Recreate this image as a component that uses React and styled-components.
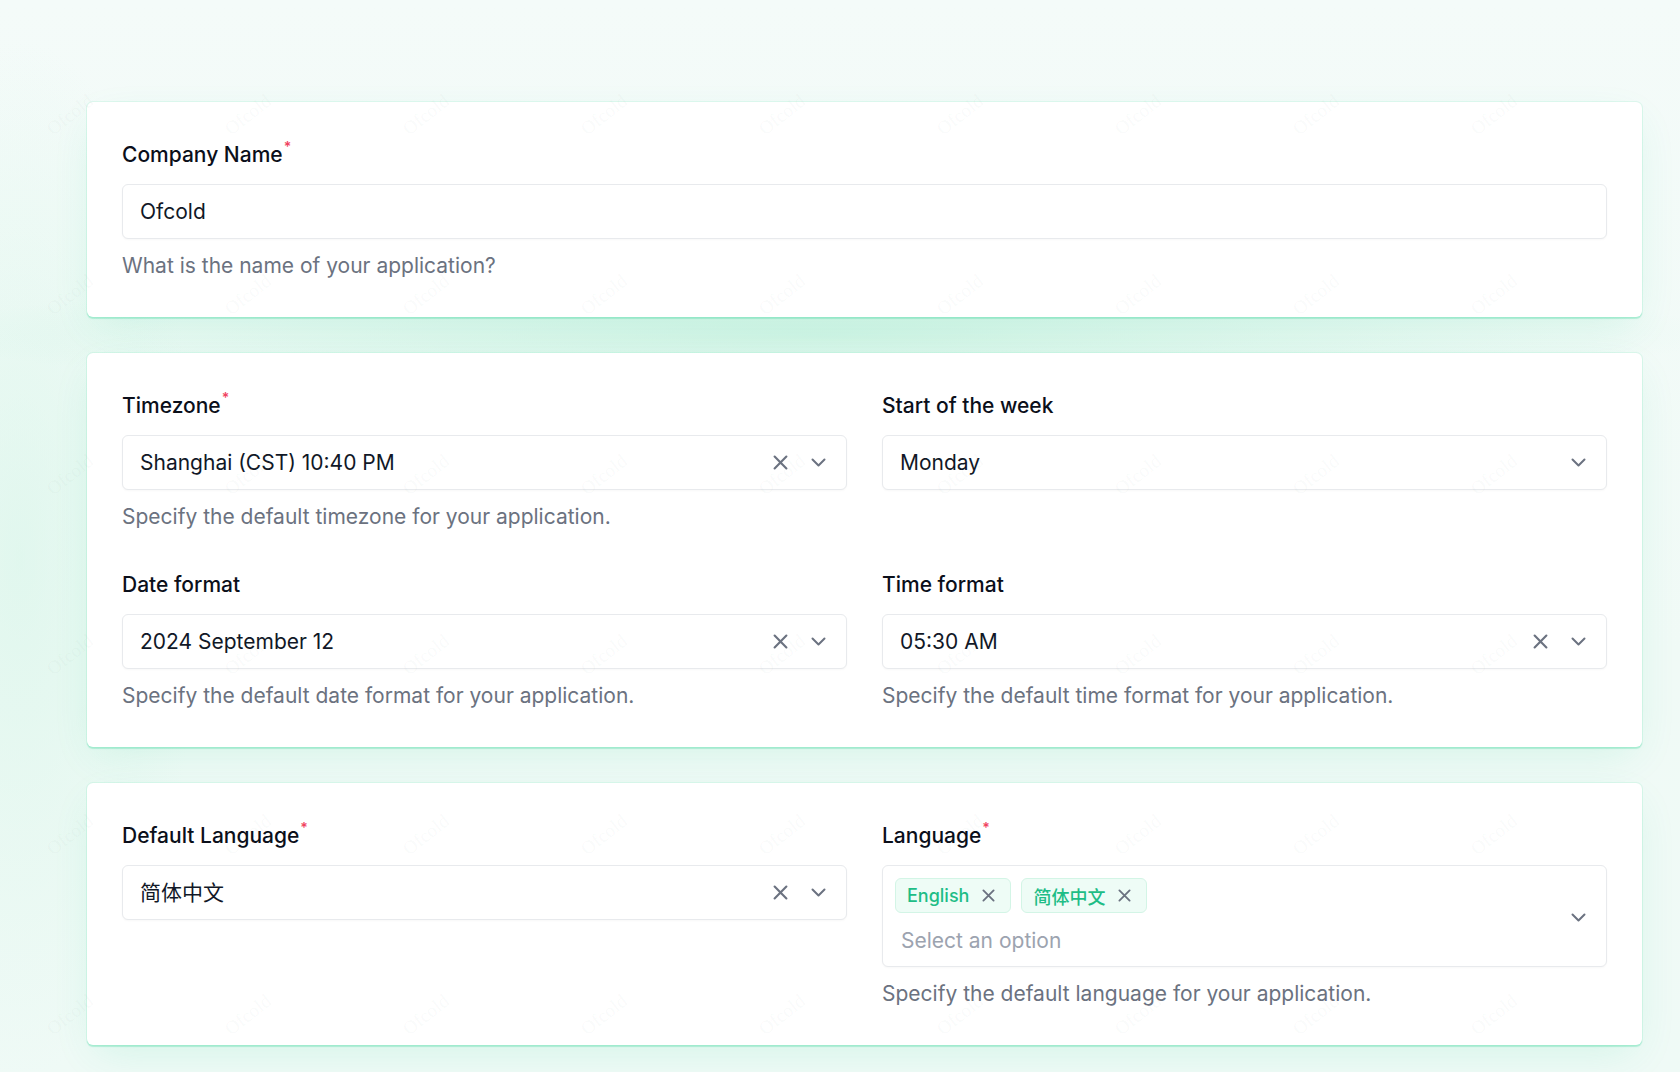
import React from "react";
import styled, { createGlobalStyle } from "styled-components";

const GlobalStyle = createGlobalStyle`
  html, body { margin: 0; padding: 0; }
  body {
    font-family: Inter, "Noto Sans", "Noto Sans CJK SC", sans-serif;
    background: #f1faf7;
    -webkit-font-smoothing: antialiased;
  }
  * { box-sizing: border-box; }
`;

const Page = styled.div`
  position: relative;
  overflow: hidden;
  min-height: 1072px;
  padding: 102px 38px 40px 87px;
  display: flex;
  flex-direction: column;
  gap: 36px;
  background:
    radial-gradient(ellipse 900px 60px at 820px 334px, rgba(200, 242, 224, 0.8), rgba(200, 242, 224, 0) 100%),
    radial-gradient(ellipse 180px 520px at 20px 560px, rgba(214, 245, 232, 0.6), rgba(214, 245, 232, 0) 100%),
    linear-gradient(180deg, #f4fbf9 0%, #f0faf6 60%, #effaf6 100%);
`;

const Card = styled.section`
  position: relative;
  background: #ffffff;
  border-radius: 6px;
  padding: 36px 35px;
  box-shadow:
    0 0 0 1px rgba(110, 231, 183, 0.16),
    0 1.5px 1px rgba(52, 211, 153, 0.3),
    0 14px 40px -10px rgba(52, 211, 153, 0.16);
`;

const Grid = styled.div`
  display: grid;
  grid-template-columns: 1fr 1fr;
  column-gap: 35px;
  row-gap: 36px;
  align-items: start;
`;

const Field = styled.div`
  display: flex;
  flex-direction: column;
  gap: 12px;
  min-width: 0;
`;

const Label = styled.label`
  font-size: 21px;
  line-height: 34px;
  font-weight: 500;
  color: #0b0f1a;
`;

const Star = styled.span`
  display: inline-block;
  vertical-align: top;
  margin-left: 1px;
  margin-top: 2px;
  font-size: 14px;
  line-height: 14px;
  font-weight: 600;
  color: #f0435f;
`;

const Help = styled.p`
  margin: 0;
  font-size: 21px;
  line-height: 30px;
  color: #6b7280;
`;

const Box = styled.div`
  display: flex;
  align-items: center;
  min-height: 55px;
  padding: ${(p) => (p.$multi ? "12px 20px 10px 12px" : "0 20px 0 17px")};
  background: #ffffff;
  border: 1px solid #e8eaed;
  border-radius: 6px;
  box-shadow: 0 1px 2px rgba(15, 23, 42, 0.03);
`;

const Value = styled.span`
  flex: 1;
  min-width: 0;
  font-size: 21px;
  line-height: 30px;
  color: #111827;
  white-space: nowrap;
`;

const Icons = styled.div`
  display: flex;
  align-items: center;
  gap: 23px;
  color: #6b7280;
`;

const MultiBody = styled.div`
  flex: 1;
  display: flex;
  flex-direction: column;
  gap: 13px;
`;

const Tags = styled.div`
  display: flex;
  gap: 10px;
`;

const Tag = styled.span`
  display: inline-flex;
  align-items: center;
  gap: 13px;
  height: 35px;
  padding: 0 15px 0 11px;
  border: 1px solid #d3f5e6;
  background: #eefcf6;
  border-radius: 6px;
  font-size: 18px;
  font-weight: 500;
  color: #1ebd86;
  svg { color: #6b7280; }
`;

const Placeholder = styled.span`
  padding-left: 6px;
  font-size: 21px;
  line-height: 30px;
  color: #9ca3af;
`;

const Watermarks = styled.div`
  position: absolute;
  top: 25px;
  left: -19px;
  display: grid;
  grid-template-columns: repeat(9, 178px);
  grid-auto-rows: 180px;
  pointer-events: none;
  z-index: 5;
`;

const Mark = styled.span`
  display: flex;
  align-items: center;
  justify-content: center;
  font-family: "Liberation Serif", serif;
  font-size: 19px;
  color: rgba(120, 140, 135, 0.05);
  transform: rotate(-38deg);
`;

const XIcon = ({ size = 15 }) => (
  <svg width={size} height={size} viewBox="0 0 14 14" fill="none" stroke="currentColor" strokeWidth="2" strokeLinecap="round">
    <path d="M1.5 1.5 12.5 12.5M12.5 1.5 1.5 12.5" />
  </svg>
);

const Chevron = () => (
  <svg width="15" height="9" viewBox="0 0 15 9" fill="none" stroke="#6b7280" strokeWidth="2" strokeLinecap="round" strokeLinejoin="round">
    <path d="M1.5 1.5 7.5 7.5 13.5 1.5" />
  </svg>
);

const Select = ({ value, clearable = true }) => (
  <Box>
    <Value>{value}</Value>
    <Icons>
      {clearable && <XIcon />}
      <Chevron />
    </Icons>
  </Box>
);

const FieldLabel = ({ children, required }) => (
  <Label>
    {children}
    {required && <Star>*</Star>}
  </Label>
);

export default function App() {
  const marks = Array.from({ length: 54 });
  return (
    <>
      <GlobalStyle />
      <Page>
        <Card>
          <Field>
            <FieldLabel required>Company Name</FieldLabel>
            <Box>
              <Value>Ofcold</Value>
            </Box>
            <Help>What is the name of your application?</Help>
          </Field>
        </Card>

        <Card>
          <Grid>
            <Field>
              <FieldLabel required>Timezone</FieldLabel>
              <Select value="Shanghai (CST) 10:40 PM" />
              <Help>Specify the default timezone for your application.</Help>
            </Field>
            <Field>
              <FieldLabel>Start of the week</FieldLabel>
              <Select value="Monday" clearable={false} />
            </Field>
            <Field>
              <FieldLabel>Date format</FieldLabel>
              <Select value="2024 September 12" />
              <Help>Specify the default date format for your application.</Help>
            </Field>
            <Field>
              <FieldLabel>Time format</FieldLabel>
              <Select value="05:30 AM" />
              <Help>Specify the default time format for your application.</Help>
            </Field>
          </Grid>
        </Card>

        <Card>
          <Grid>
            <Field>
              <FieldLabel required>Default Language</FieldLabel>
              <Select value="简体中文" />
            </Field>
            <Field>
              <FieldLabel required>Language</FieldLabel>
              <Box $multi>
                <MultiBody>
                  <Tags>
                    <Tag>English<XIcon size={13} /></Tag>
                    <Tag>简体中文<XIcon size={13} /></Tag>
                  </Tags>
                  <Placeholder>Select an option</Placeholder>
                </MultiBody>
                <Chevron />
              </Box>
              <Help>Specify the default language for your application.</Help>
            </Field>
          </Grid>
        </Card>

        <Watermarks>
          {marks.map((_, i) => (
            <Mark key={i}>Ofcold</Mark>
          ))}
        </Watermarks>
      </Page>
    </>
  );
}
